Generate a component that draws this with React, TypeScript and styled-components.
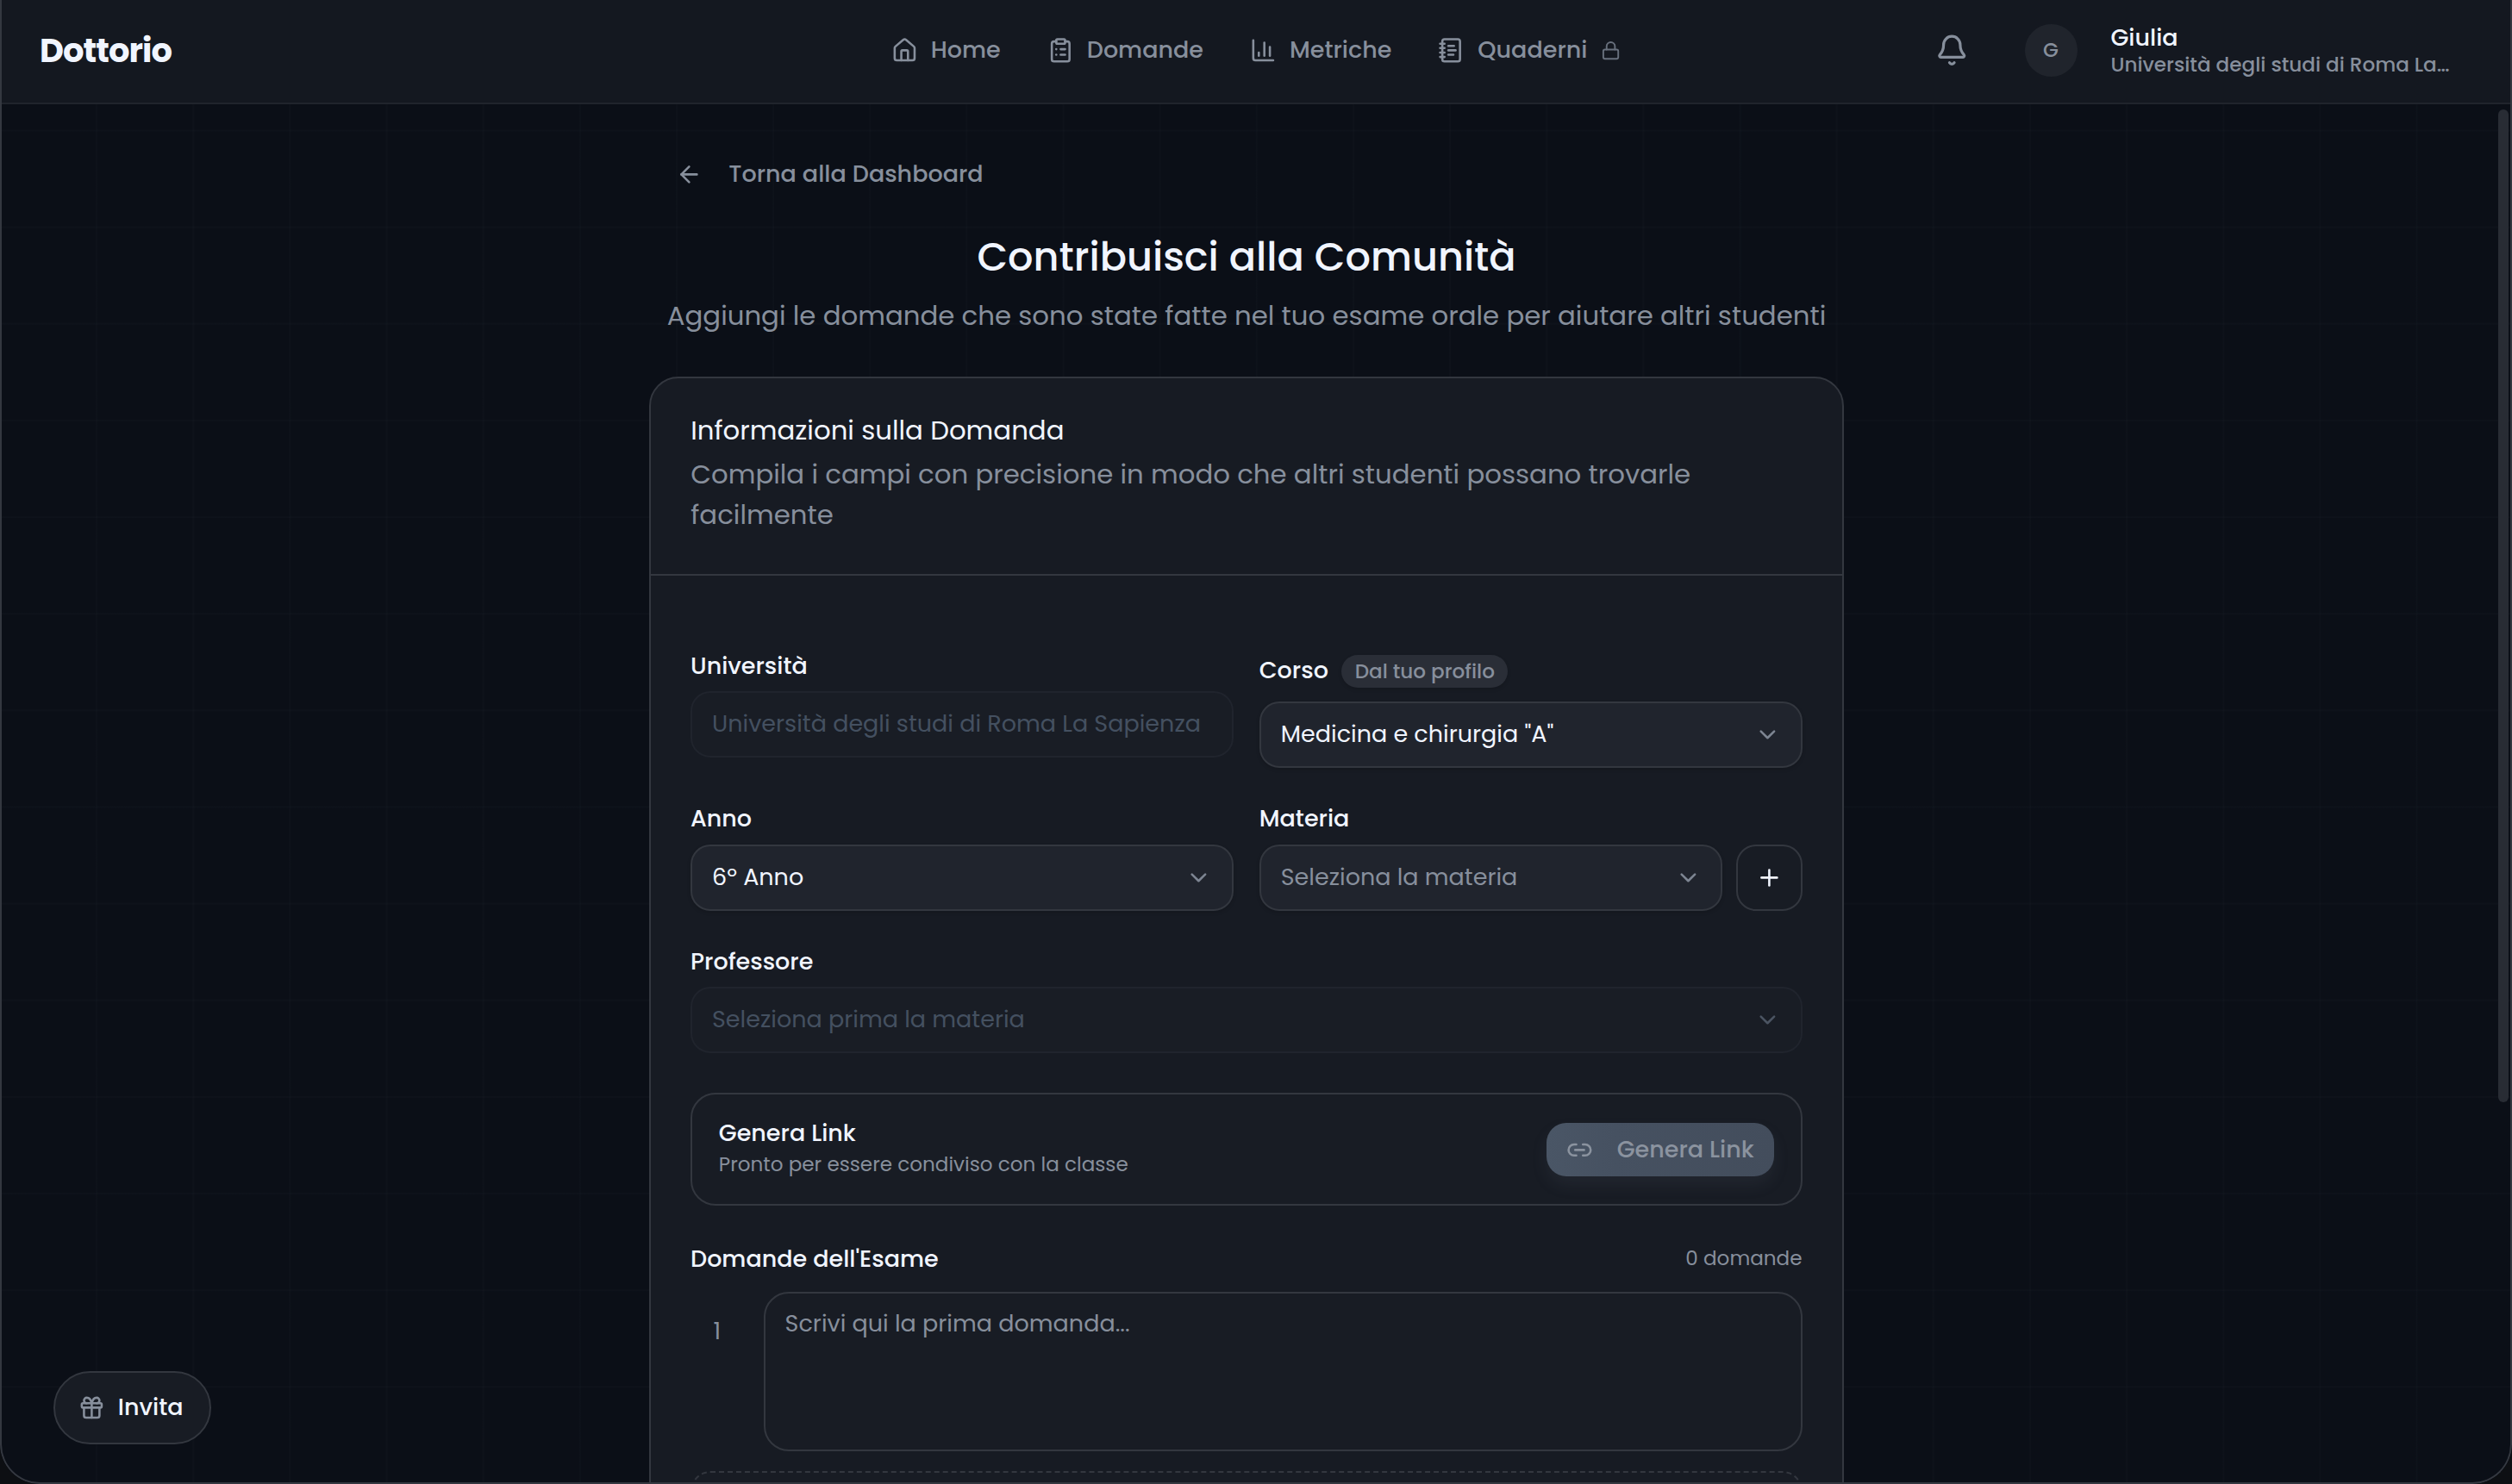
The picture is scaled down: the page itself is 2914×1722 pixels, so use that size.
import React from "react";
import styled, { createGlobalStyle, css } from "styled-components";
import {
  ArrowLeft,
  Bell,
  ChartColumn,
  ChevronDown,
  ClipboardList,
  Gift,
  House,
  Link2,
  Lock,
  NotebookText,
  Plus,
} from "lucide-react";

const c = {
  page: "#0b0f17",
  header: "#141820",
  card: "#171b23",
  raised: "#181c24",
  field: "#20242d",
  border: "#33373f",
  borderSoft: "#20242d",
  text: "#f1f5ff",
  muted: "#878f9c",
  dim: "#445060",
  button: "#465161",
};

const Global = createGlobalStyle`
  *, *::before, *::after { box-sizing: border-box; }
  body {
    margin: 0;
    background: #0d0f13;
    color: ${c.text};
    font-family: Poppins, Inter, "Open Sans", sans-serif;
    font-size: 27px;
    line-height: 38.5px;
  }
`;

const Window = styled.div`
  position: relative;
  display: flex;
  flex-direction: column;
  height: 1722px;
  overflow: hidden;
  border-radius: 0 0 46px 46px;
  background: ${c.page};

  &::after {
    content: "";
    position: absolute;
    inset: 0;
    border: 2px solid #343840;
    border-top: 0;
    border-radius: inherit;
    pointer-events: none;
  }
`;

const Header = styled.header`
  display: grid;
  grid-template-columns: 1fr auto 1fr;
  align-items: center;
  flex: none;
  height: 121px;
  padding: 0 67.5px 2px 46px;
  border-bottom: 2px solid #20242c;
  background: ${c.header};
`;

const Logo = styled.div`
  font-size: 38.5px;
  font-weight: 700;
  line-height: 54px;
  letter-spacing: -0.025em;
`;

const Nav = styled.nav`
  display: flex;
  gap: 53.8px;
  /* offsets the asymmetric header padding so the links stay on the window axis */
  margin-left: 21px;
`;

const NavLink = styled.a`
  display: flex;
  align-items: center;
  gap: 15.4px;
  color: ${c.muted};
  font-weight: 500;
`;

const LockIcon = styled(Lock)`
  color: #68707d;
`;

const Account = styled.div`
  display: flex;
  align-items: center;
  justify-content: flex-end;
`;

const BellIcon = styled(Bell)`
  margin-right: 65.5px;
  color: ${c.muted};
`;

const Avatar = styled.div`
  display: grid;
  place-items: center;
  width: 61px;
  height: 61px;
  margin-right: 39px;
  border-radius: 50%;
  background: #20242c;
  color: ${c.muted};
  font-size: 23.1px;
  font-weight: 500;
`;

const Identity = styled.div`
  width: 398px;
  padding-top: 2px;
  line-height: 30.8px;
  font-weight: 500;
  white-space: nowrap;
`;

const School = styled.div`
  color: ${c.muted};
  font-size: 23.1px;
`;

const Main = styled.main`
  display: flex;
  justify-content: center;
  flex: 1;
  min-height: 0;
  padding: 62px 22px 0 0;
  background-image:
    linear-gradient(to right, rgba(190, 215, 230, 0.017) 2px, transparent 2px),
    linear-gradient(to bottom, rgba(190, 215, 230, 0.017) 2px, transparent 2px);
  background-size: 112.15px 112.15px;
  background-position: -1px 29.5px;
`;

const Column = styled.div`
  display: flex;
  flex-direction: column;
  width: 1386px;
`;

const BackLink = styled.a`
  display: flex;
  align-items: center;
  gap: 30.4px;
  padding-left: 31px;
  color: ${c.muted};
  font-weight: 500;
`;

const Title = styled.h1`
  margin: 45px 0 0;
  font-size: 46.2px;
  font-weight: 500;
  line-height: 62px;
  text-align: center;
`;

const Lead = styled.p`
  margin: 15px 0 47px;
  color: ${c.muted};
  font-size: 30.8px;
  line-height: 46px;
  text-align: center;
  white-space: nowrap;
`;

const Card = styled.section`
  flex: none;
  height: 1500px;
  border: 2px solid ${c.border};
  border-radius: 34px;
  background: ${c.card};
`;

const CardHeader = styled.div`
  height: 229px;
  padding: 46px 46.2px 0;
  border-bottom: 2px solid ${c.border};
`;

const CardTitle = styled.h2`
  margin: 0 0 12px;
  font-size: 30.8px;
  font-weight: 400;
  line-height: 30px;
`;

const CardText = styled.p`
  margin: 0;
  color: ${c.muted};
  font-size: 30.8px;
  line-height: 47px;
`;

const Form = styled.div`
  display: flex;
  flex-direction: column;
  gap: 46px;
  padding: 92px 46.5px 0 46px;
`;

const FieldRow = styled.div`
  display: grid;
  grid-template-columns: 1fr 1fr;
  align-items: start;
  gap: 30px;
`;

const Field = styled.div`
  display: flex;
  flex-direction: column;
  gap: 16px;
`;

const Label = styled.label`
  display: flex;
  align-items: center;
  gap: 15.4px;
  font-weight: 500;
  line-height: 26.6px;
`;

const Badge = styled.span`
  padding: 0 15.4px;
  border-radius: 20px;
  background: #2a2e37;
  color: ${c.muted};
  font-size: 23.1px;
  line-height: 38.5px;
  box-shadow: 0 2px 4px rgba(0, 0, 0, 0.15);
`;

const Control = styled.div<{ $tone?: "value" | "placeholder" | "disabled" }>`
  display: flex;
  flex: 1;
  align-items: center;
  justify-content: space-between;
  height: 77px;
  min-height: 77px;
  padding: 0 22.5px 0 23px;
  border: 2px solid ${c.border};
  border-radius: 23px;
  background: ${c.field};
  box-shadow: 0 2px 4px rgba(0, 0, 0, 0.15);
  color: ${(p) => (p.$tone === "placeholder" ? c.muted : c.text)};
  ${(p) =>
    p.$tone === "disabled" &&
    css`
      border-color: ${c.borderSoft};
      background: #191d25;
      box-shadow: none;
      color: ${c.dim};
    `}
`;

const Chevron = styled(ChevronDown)<{ $dim?: boolean }>`
  flex: none;
  color: ${(p) => (p.$dim ? "#4b5462" : "#7d8592")};
`;

const Inline = styled.div`
  display: flex;
  gap: 16px;
`;

const AddButton = styled.button`
  display: grid;
  place-items: center;
  width: 76.5px;
  height: 77px;
  padding: 0;
  border: 2px solid ${c.border};
  border-radius: 23px;
  background: ${c.raised};
  color: ${c.text};
`;

const SharePanel = styled.div`
  display: flex;
  align-items: center;
  justify-content: space-between;
  height: 131px;
  padding: 1px 30.8px 0;
  border: 2px solid ${c.border};
  border-radius: 29px;
  background: ${c.raised};
`;

const ShareTitle = styled.div`
  margin-bottom: 8px;
  font-weight: 500;
  line-height: 27px;
`;

const Small = styled.div`
  color: ${c.muted};
  font-size: 23.1px;
  line-height: 30.8px;
`;

const ShareButton = styled.button`
  display: flex;
  align-items: center;
  gap: 27.5px;
  height: 62px;
  padding: 0 23px;
  border: 0;
  border-radius: 23px;
  background: linear-gradient(to right, #4a5666, ${c.button} 30%, #434d5c);
  box-shadow: 0 10px 18px rgba(90, 98, 112, 0.14);
  color: #8b939f;
  font: inherit;
  font-weight: 500;
`;

const Questions = styled.div`
  display: flex;
  flex-direction: column;
  gap: 23px;
`;

const QuestionsHead = styled.div`
  display: flex;
  align-items: center;
  justify-content: space-between;
  font-weight: 500;
  line-height: 31px;

  ${Small} {
    font-weight: 400;
  }
`;

const Question = styled.div`
  display: flex;
  gap: 23px;
`;

const QuestionNumber = styled.div`
  width: 61.6px;
  padding-top: 27px;
  color: ${c.muted};
  text-align: center;
`;

const QuestionInput = styled.div`
  flex: 1;
  height: 185px;
  padding: 16px 23px;
  border: 2px solid ${c.border};
  border-radius: 29px;
  background: ${c.raised};
  color: ${c.muted};
`;

const AddQuestion = styled.div`
  height: 77px;
  border: 2px dashed ${c.border};
  border-radius: 23px;
  background: ${c.raised};
`;

const ScrollThumb = styled.div`
  position: absolute;
  top: 127px;
  right: 4px;
  width: 12px;
  height: 1152px;
  border-radius: 6px;
  background: #282c34;
`;

const InviteButton = styled.button`
  position: absolute;
  left: 62px;
  bottom: 46px;
  display: flex;
  align-items: center;
  gap: 15px;
  width: 183px;
  height: 85px;
  padding: 0 0 1px 27px;
  border: 2px solid ${c.border};
  border-radius: 43px;
  background: ${c.raised};
  color: ${c.text};
  font: inherit;
  font-weight: 500;

  svg {
    color: ${c.muted};
  }
`;

const ICON = 30.8;

const links = [
  { label: "Home", Icon: House },
  { label: "Domande", Icon: ClipboardList },
  { label: "Metriche", Icon: ChartColumn },
  { label: "Quaderni", Icon: NotebookText, locked: true },
];

function Select({ tone, children }: { tone?: "value" | "placeholder" | "disabled"; children: React.ReactNode }) {
  return (
    <Control $tone={tone}>
      <span>{children}</span>
      <Chevron size={ICON} $dim={tone === "disabled"} />
    </Control>
  );
}

export default function App() {
  return (
    <>
      <Global />
      <Window>
        <Header>
          <Logo>Dottorio</Logo>
          <Nav>
            {links.map(({ label, Icon, locked }) => (
              <NavLink key={label}>
                <Icon size={ICON} />
                {label}
                {locked && <LockIcon size={23.1} />}
              </NavLink>
            ))}
          </Nav>
          <Account>
            <BellIcon size={38.5} />
            <Avatar>G</Avatar>
            <Identity>
              Giulia
              <School>Università degli studi di Roma La…</School>
            </Identity>
          </Account>
        </Header>

        <Main>
          <Column>
            <BackLink>
              <ArrowLeft size={ICON} />
              Torna alla Dashboard
            </BackLink>
            <Title>Contribuisci alla Comunità</Title>
            <Lead>Aggiungi le domande che sono state fatte nel tuo esame orale per aiutare altri studenti</Lead>

            <Card>
              <CardHeader>
                <CardTitle>Informazioni sulla Domanda</CardTitle>
                <CardText>
                  Compila i campi con precisione in modo che altri studenti possano trovarle facilmente
                </CardText>
              </CardHeader>

              <Form>
                <FieldRow>
                  <Field>
                    <Label>Università</Label>
                    <Control $tone="disabled">Università degli studi di Roma La Sapienza</Control>
                  </Field>
                  <Field>
                    <Label>
                      Corso <Badge>Dal tuo profilo</Badge>
                    </Label>
                    <Select>Medicina e chirurgia "A"</Select>
                  </Field>
                </FieldRow>

                <FieldRow>
                  <Field>
                    <Label>Anno</Label>
                    <Select>6º Anno</Select>
                  </Field>
                  <Field>
                    <Label>Materia</Label>
                    <Inline>
                      <Select tone="placeholder">Seleziona la materia</Select>
                      <AddButton>
                        <Plus size={ICON} />
                      </AddButton>
                    </Inline>
                  </Field>
                </FieldRow>

                <Field>
                  <Label>Professore</Label>
                  <Select tone="disabled">Seleziona prima la materia</Select>
                </Field>

                <SharePanel>
                  <div>
                    <ShareTitle>Genera Link</ShareTitle>
                    <Small>Pronto per essere condiviso con la classe</Small>
                  </div>
                  <ShareButton>
                    <Link2 size={ICON} />
                    Genera Link
                  </ShareButton>
                </SharePanel>

                <Questions>
                  <QuestionsHead>
                    Domande dell'Esame
                    <Small>0 domande</Small>
                  </QuestionsHead>
                  <Question>
                    <QuestionNumber>1</QuestionNumber>
                    <QuestionInput>Scrivi qui la prima domanda...</QuestionInput>
                  </Question>
                  <AddQuestion />
                </Questions>
              </Form>
            </Card>
          </Column>
        </Main>

        <ScrollThumb />
        <InviteButton>
          <Gift size={ICON} />
          Invita
        </InviteButton>
      </Window>
    </>
  );
}
